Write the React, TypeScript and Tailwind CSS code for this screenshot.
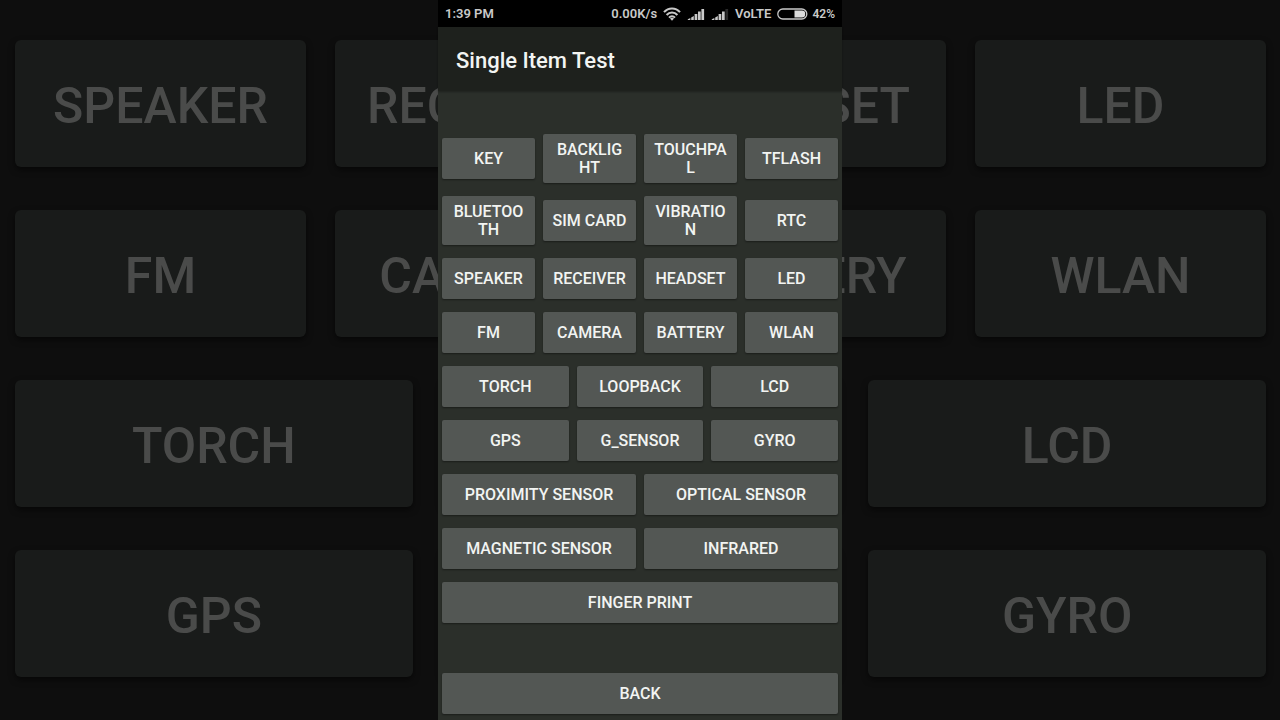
import clsx from 'clsx';

const backdropRows = [
  ['SPEAKER', 'RECEIVER', 'HEADSET', 'LED'],
  ['FM', 'CAMERA', 'BATTERY', 'WLAN'],
  ['TORCH', '', 'LCD'],
  ['GPS', '', 'GYRO'],
];

const testRows = [
  ['KEY', 'BACKLIGHT', 'TOUCHPAL', 'TFLASH'],
  ['BLUETOOTH', 'SIM CARD', 'VIBRATION', 'RTC'],
  ['SPEAKER', 'RECEIVER', 'HEADSET', 'LED'],
  ['FM', 'CAMERA', 'BATTERY', 'WLAN'],
  ['TORCH', 'LOOPBACK', 'LCD'],
  ['GPS', 'G_SENSOR', 'GYRO'],
  ['PROXIMITY SENSOR', 'OPTICAL SENSOR'],
  ['MAGNETIC SENSOR', 'INFRARED'],
  ['FINGER PRINT'],
];

const WifiIcon = () => (
  <svg width="18" height="14" viewBox="0 0 18 14" fill="none" stroke="#c9c9c9" strokeWidth="2">
    <path d="M1 5.2C5.4 0.2 12.6 0.2 17 5.2" />
    <path d="M3.6 8C6.6 4.6 11.4 4.6 14.4 8" />
    <path d="M6 10.6C7.7 8.8 10.3 8.8 12 10.6" />
    <path d="M7 11.6C8.2 10.6 9.8 10.6 11 11.6L9 13.8Z" fill="#c9c9c9" stroke="none" />
  </svg>
);

const SignalIcon = ({ weak = false }: { weak?: boolean }) => (
  <svg width="18" height="12" viewBox="0 0 18 12" fill="#c9c9c9">
    <path d="M0.8 12V11.3L3.4 10V12Z" />
    <path d="M4.2 12V9.4L6.8 8V12Z" />
    <rect x="7.6" y="6" width="2.7" height="6" />
    <rect x="11" y="3.5" width="2.7" height="8.5" />
    <rect x="14.4" y="1" width="2.7" height="11" fill={weak ? '#2a2a2a' : '#c9c9c9'} />
  </svg>
);

const BatteryIcon = () => (
  <svg width="31" height="12" viewBox="0 0 31 12" fill="none">
    <rect x="0.8" y="1" width="29" height="10" rx="5" stroke="#c9c9c9" strokeWidth="1.3" />
    <path d="M17.5 2.6H25a3.2 3.2 0 0 1 3.2 3.2v0.4A3.2 3.2 0 0 1 25 9.4H17.5Z" fill="#dcdcdc" />
  </svg>
);

const StatusBar = () => (
  <div className="flex h-[27px] items-center justify-between bg-black px-[7px] pt-px text-[13px] font-semibold text-[#c9c9c9]">
    <span>1:39 PM</span>
    <div className="flex items-center gap-[6px]">
      <span>0.00K/s</span>
      <WifiIcon />
      <SignalIcon />
      <SignalIcon weak />
      <span>VoLTE</span>
      <div className="flex items-center gap-1">
        <BatteryIcon />
        <span className="text-xs">42%</span>
      </div>
    </div>
  </div>
);

const rowClass = (count: number) =>
  clsx('grid items-center', {
    'grid-cols-4': count === 4,
    'grid-cols-3': count === 3,
    'grid-cols-2': count === 2,
    'grid-cols-1': count === 1,
  });

const TestButton = ({ label }: { label: string }) => (
  <button
    type="button"
    className="min-h-[41px] rounded-xs bg-[#535754] px-[9px] pt-[7px] pb-[6px] text-base leading-[18px] font-medium break-all text-[#f2f4f2] shadow-[0_1px_2px_rgba(0,0,0,0.4)]"
  >
    {label}
  </button>
);

const Backdrop = () => (
  <div
    aria-hidden="true"
    className="col-start-1 row-start-1 flex flex-col gap-[43px] overflow-hidden pt-10 pr-[14px] pl-[15px]"
  >
    {backdropRows.map((row, i) => (
      <div key={i} className={clsx(rowClass(row.length), 'gap-[29px]')}>
        {row.map((label, j) => (
          <div
            key={j}
            className="flex h-[127px] items-center justify-center rounded-md bg-[#191b1a] pt-[6px] text-[50px] font-medium text-[#4a4b4a] shadow-[0_3px_6px_rgba(0,0,0,0.5)]"
          >
            {label}
          </div>
        ))}
      </div>
    ))}
  </div>
);

const App = () => {
  return (
    <div className="grid min-h-screen grid-cols-1 bg-[#0e0e0e] font-[Roboto,sans-serif]">
      <Backdrop />

      <div className="z-10 col-start-1 row-start-1 mx-auto flex w-full max-w-[404px] flex-col bg-[#2b2f2a]">
        <StatusBar />
        <header className="flex h-16 items-center bg-[#1e211d] px-[18px] pt-[2px] shadow-[0_1px_2px_rgba(0,0,0,0.3)]">
          <h1 className="text-[22px] font-medium text-[#f2f4f2]">Single Item Test</h1>
        </header>

        <main className="flex flex-1 flex-col gap-[13px] px-1 pt-[43px] pb-[6px]">
          {testRows.map((row, i) => (
            <div key={i} className={clsx(rowClass(row.length), 'gap-2')}>
              {row.map((label) => (
                <TestButton key={label} label={label} />
              ))}
            </div>
          ))}
          <div className="mt-auto grid">
            <TestButton label="BACK" />
          </div>
        </main>
      </div>
    </div>
  );
};

export default App;
